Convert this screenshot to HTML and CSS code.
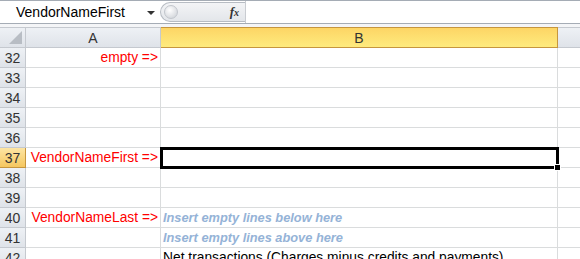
FILE: index.html
```html
<!DOCTYPE html>
<html lang="en">
<head>
  <meta charset="UTF-8" />
  <title>Sheet</title>
  <link rel="stylesheet" href="styles.css">
</head>
<body>

<!-- Formula bar -->
<div class="formula-bar">
  <div class="name-box">
    <span>VendorNameFirst</span>
    <span class="dropdown"></span>
  </div>
  <div class="fx-area">
    <div class="pill">
      <span class="knob"></span>
      <span class="fx">f<i>x</i></span>
    </div>
  </div>
  <div class="formula-input"></div>
</div>
<div class="strip"></div>

<!-- Grid -->
<div class="sheet">
  <div class="corner"><span class="tri"></span></div>
  <div class="col-head">A</div>
  <div class="col-head active">B</div>
  <div class="col-head last"></div>

  <div class="row-head">32</div><div class="cell a">empty =&gt;</div><div class="cell"></div><div class="cell last"></div>
  <div class="row-head">33</div><div class="cell a"></div><div class="cell"></div><div class="cell last"></div>
  <div class="row-head">34</div><div class="cell a"></div><div class="cell"></div><div class="cell last"></div>
  <div class="row-head">35</div><div class="cell a"></div><div class="cell"></div><div class="cell last"></div>
  <div class="row-head">36</div><div class="cell a"></div><div class="cell"></div><div class="cell last"></div>
  <div class="row-head active">37</div><div class="cell a">VendorNameFirst =&gt;</div><div class="cell selected"></div><div class="cell last"></div>
  <div class="row-head">38</div><div class="cell a"></div><div class="cell"></div><div class="cell last"></div>
  <div class="row-head">39</div><div class="cell a"></div><div class="cell"></div><div class="cell last"></div>
  <div class="row-head">40</div><div class="cell a">VendorNameLast =&gt;</div><div class="cell hint">Insert empty lines below here</div><div class="cell last"></div>
  <div class="row-head">41</div><div class="cell a"></div><div class="cell hint">Insert empty lines above here</div><div class="cell last"></div>
  <div class="row-head">42</div><div class="cell a"></div><div class="cell">Net transactions (Charges minus credits and payments)</div><div class="cell last"></div>
</div>

</body>
</html>
```

FILE: styles.css
```css
body {
  margin: 0;
  padding: 0;
  font-family: 'Liberation Sans', Arial, sans-serif;
  background: #fff;
  overflow: hidden;
}

/* Formula bar */
.formula-bar {
  display: flex;
  height: 22px;
  border-top: 1px solid #a5acb5;
  border-bottom: 1px solid #a5acb5;
  background: #fff;
}

.name-box {
  width: 160px;
  display: flex;
  align-items: center;
  justify-content: space-between;
  padding-left: 16px;
  padding-right: 5px;
  box-sizing: border-box;
  font-size: 14px;
  color: #000;
}

.dropdown {
  width: 0;
  height: 0;
  border-left: 4px solid transparent;
  border-right: 4px solid transparent;
  border-top: 4px solid #333;
  margin-top: 2px;
}

.fx-area {
  width: 86px;
  padding-top: 1px;
  box-sizing: border-box;
  border-right: 1px solid #c9ccd1;
}

.pill {
  height: 20px;
  border: 1px solid #b7bcc3;
  border-right: none;
  border-radius: 10px 0 0 10px;
  background: linear-gradient(#f3f4f6, #e3e6ea);
  display: flex;
  align-items: center;
  justify-content: space-between;
  padding-left: 3px;
  padding-right: 6px;
  box-sizing: border-box;
}

.knob {
  width: 12px;
  height: 12px;
  border-radius: 50%;
  background: radial-gradient(circle at 40% 35%, #fff, #c9cdd3);
  border: 1px solid #c2c6cc;
}

.fx {
  font-family: 'Liberation Serif', serif;
  font-style: italic;
  font-weight: bold;
  font-size: 13px;
  color: #333;
}

.fx i {
  font-size: 10px;
}

.formula-input {
  flex: 1;
}

.strip {
  height: 3px;
  background: #f4f5f7;
}

/* Sheet */
.sheet {
  display: grid;
  grid-template-columns: 26px 135px 397px 1fr;
  grid-auto-rows: 20px;
  grid-template-rows: 21px;
  font-size: 13.8px;
}

.corner,
.col-head,
.row-head {
  background: linear-gradient(#eef1f5, #dfe3e9);
  border-right: 1px solid #c5c9cf;
  border-bottom: 1px solid #c5c9cf;
  box-sizing: border-box;
  color: #333;
  display: flex;
  align-items: center;
  justify-content: center;
}

.corner {
  border-top: 1px solid #c5c9cf;
  position: relative;
}

.col-head {
  border-top: 1px solid #c5c9cf;
  font-size: 14px;
}

.tri {
  position: absolute;
  right: 3px;
  bottom: 3px;
  width: 0;
  height: 0;
  border-left: 13px solid transparent;
  border-bottom: 13px solid #b8bdc4;
}

.col-head.active {
  background: linear-gradient(#fdd565, #feeb7e);
  border-color: #c6963e;
  border-left: none;
}

.col-head.last {
  border-right: none;
}

.row-head {
  font-size: 14px;
}

.row-head.active {
  background: linear-gradient(#fde5a3, #f5c760);
  border-bottom-color: #c6963e;
  border-right-color: #c6963e;
}

.cell {
  border-right: 1px solid #dadcdd;
  border-bottom: 1px solid #dadcdd;
  box-sizing: border-box;
  white-space: nowrap;
  padding: 0 2px;
  line-height: 20px;
  color: #000;
}

.cell.a {
  color: #ff0000;
  text-align: right;
}

.cell.last {
  border-right: none;
}

.hint {
  color: #95b3d7;
  font-style: italic;
  font-weight: bold;
  font-size: 12.8px;
}

.selected {
  position: relative;
  outline: 3px solid #000;
  outline-offset: -2px;
}

.selected::after {
  content: "";
  position: absolute;
  right: -4px;
  bottom: -4px;
  width: 5px;
  height: 5px;
  background: #000;
  border: 1px solid #fff;
}
```
